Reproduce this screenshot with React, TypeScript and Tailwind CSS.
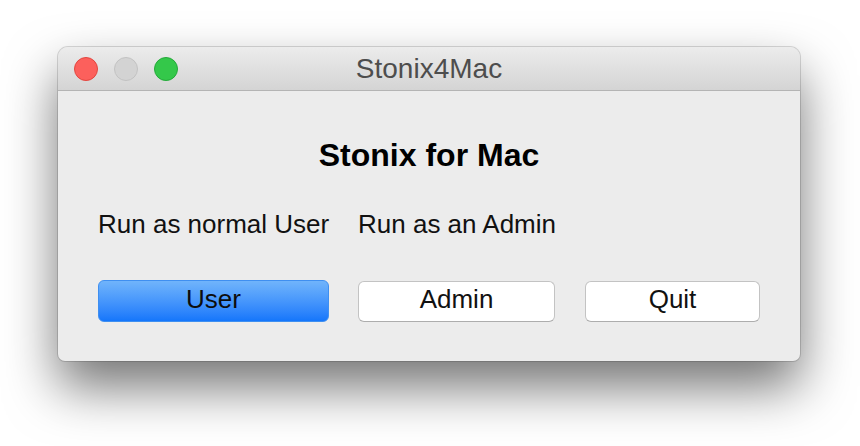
import React from "react"

const font = { fontFamily: '"Liberation Sans", Arial, Helvetica, sans-serif' }

function TrafficLights() {
    return (
        <div className="flex items-center gap-4 pl-4">
            <span className="h-6 w-6 rounded-full border border-[#e2463f] bg-[#fc605c]" />
            <span className="h-6 w-6 rounded-full border border-[#c2c2c2] bg-[#d3d3d3]" />
            <span className="h-6 w-6 rounded-full border border-[#24a93a] bg-[#34c84a]" />
        </div>
    )
}

export default function App() {
    return (
        <div className="min-h-[446px] w-[860px] bg-white pl-[58px] pt-[47px]" style={font}>
            <div className="w-[742px] overflow-hidden rounded-t-[10px] rounded-b-[7px] bg-[#ececec] shadow-[0_26px_52px_rgba(0,0,0,0.55),0_0_0_1px_rgba(0,0,0,0.14)]">
                {/* title bar */}
                <div className="relative flex h-[44px] items-center border-b border-[#b4b4b4] bg-gradient-to-b from-[#ececec] to-[#d4d4d4]">
                    <TrafficLights />
                    <div className="absolute inset-0 flex items-center justify-center text-[28px] leading-none text-[#4d4d4d]">
                        Stonix4Mac
                    </div>
                </div>

                {/* content */}
                <div className="flex flex-col pb-[39px] pl-[40px]">
                    <h1 className="mt-[48px] pr-[40px] text-center text-[32px] font-bold leading-none text-black">
                        Stonix for Mac
                    </h1>

                    <div className="mt-[40px] flex text-[26px] leading-none text-[#111]">
                        <span className="w-[260px]">Run as normal User</span>
                        <span>Run as an Admin</span>
                    </div>

                    <div className="mt-[43px] flex items-center text-[26px] leading-none">
                        <button className="h-[42px] w-[231px] rounded-[6px] border border-[#3f8ff0] bg-gradient-to-b from-[#70b4fb] to-[#1476fb] pb-[5px] text-[#0d0d0d]">
                            User
                        </button>
                        <button className="ml-[29px] h-[41px] w-[197px] rounded-[6px] border border-[#c3c3c3] border-b-[#adadad] bg-white pb-[5px] text-[#111]">
                            Admin
                        </button>
                        <button className="ml-[30px] h-[41px] w-[175px] rounded-[6px] border border-[#c3c3c3] border-b-[#adadad] bg-white pb-[5px] text-[#111]">
                            Quit
                        </button>
                    </div>
                </div>
            </div>
        </div>
    )
}
